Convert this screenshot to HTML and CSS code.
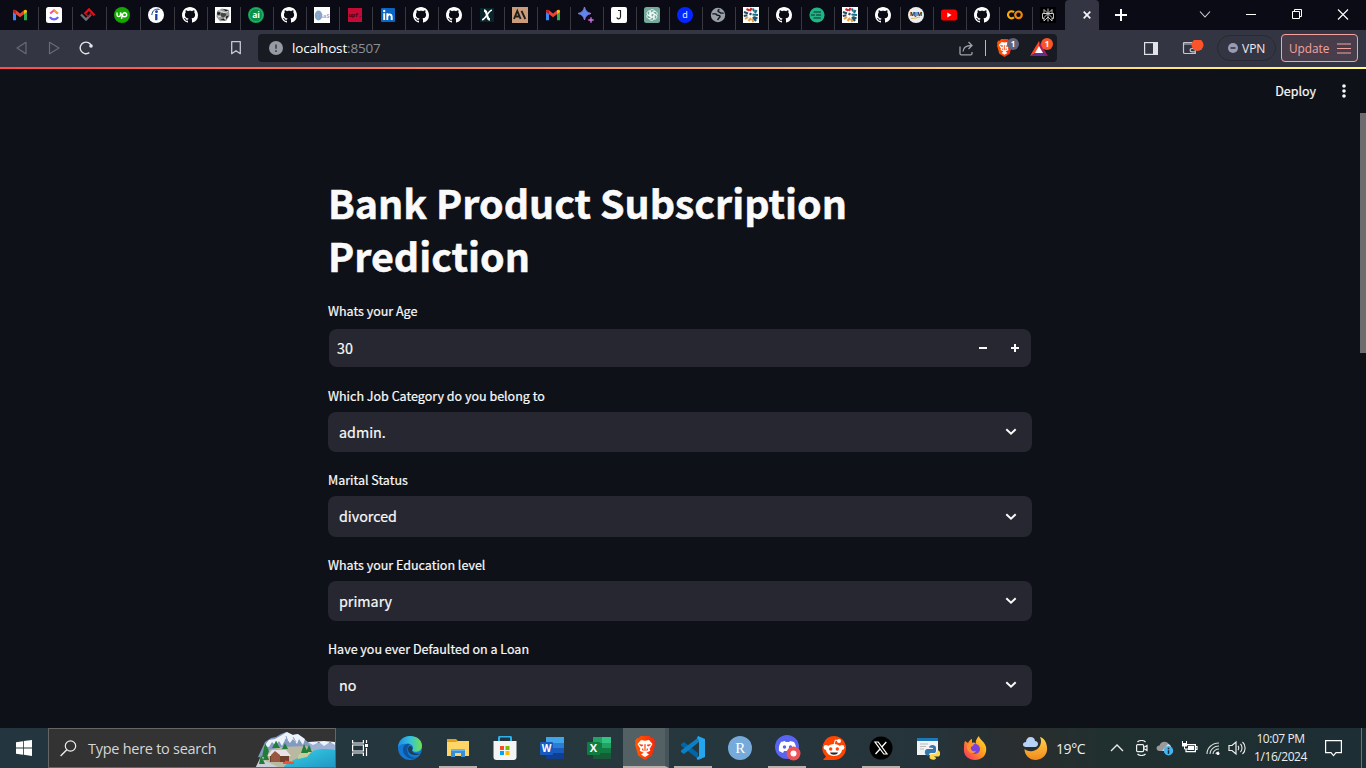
FILE: index.html
```html
<!DOCTYPE html>
<html lang="en">
<head>
<meta charset="utf-8">
<title>Bank Product Subscription Prediction</title>
<link rel="stylesheet" href="styles.css">
</head>
<body>
<svg class="defs" aria-hidden="true">
  <defs>
    <linearGradient id="g-edge" x1="0" y1="0" x2="1" y2="0"><stop offset="0" stop-color="#1d8ee0"/><stop offset=".5" stop-color="#35c1dd"/><stop offset="1" stop-color="#6fe44c"/></linearGradient>
    <linearGradient id="g-brave" x1="0" x2="1"><stop offset="0" stop-color="#ff5a00"/><stop offset="1" stop-color="#ff2408"/></linearGradient>
    <linearGradient id="g-star" x1="0" y1="0" x2="1" y2="1"><stop offset="0" stop-color="#e0567c"/><stop offset=".45" stop-color="#4d8df5"/><stop offset="1" stop-color="#d05bd0"/></linearGradient>
    <linearGradient id="g-fox" x1="1" y1="0" x2="0" y2="1"><stop offset="0" stop-color="#ffe62e"/><stop offset=".45" stop-color="#ff9b1d"/><stop offset="1" stop-color="#f5256d"/></linearGradient>
    <linearGradient id="g-moon" x1="0" y1="0" x2="0" y2="1"><stop offset="0" stop-color="#ffd24a"/><stop offset="1" stop-color="#f28a1c"/></linearGradient>
    <linearGradient id="g-lake" x1="0" y1="0" x2="1" y2="1"><stop offset="0" stop-color="#35d3e6"/><stop offset="1" stop-color="#2196c4"/></linearGradient>
  </defs>
  <symbol id="gmail" viewBox="0 0 16 16"><path d="M1 4v9.300h3V7z" fill="#4285f4"/><path d="M15 4v9.300h-3V7z" fill="#34a853"/><path d="M1 4.300C1 2.600 2.800 2.400 4 3.300L8 6.400l4-3.100v3.900L8 10.200 1 5.100z" fill="#ea4335"/><path d="M12 3.300c1.400-1 3-.6 3 1V5l-3 2.200z" fill="#fbbc04"/><path d="M1 4.300C1 3.300 2 2.600 4 3.300v3.900L1 5z" fill="#c5221f"/></symbol>
  <symbol id="github" viewBox="0 0 16 16"><path fill="#fff" d="M8 0C3.580 0 0 3.580 0 8c0 3.540 2.290 6.530 5.470 7.590.4.070.55-.17.55-.38 0-.19-.01-.82-.01-1.490-2.010.37-2.530-.49-2.690-.94-.09-.23-.48-.94-.82-1.130-.28-.15-.68-.52-.01-.53.63-.01 1.080.58 1.230.82.72 1.210 1.870.87 2.330.66.07-.52.28-.87.51-1.070-1.780-.2-3.640-.89-3.640-3.950 0-.87.31-1.590.82-2.150-.08-.2-.36-1.020.08-2.120 0 0 .67-.21 2.200.82.64-.18 1.320-.27 2-.27s1.360.09 2 .27c1.530-1.040 2.200-.82 2.200-.82.44 1.100.16 1.920.08 2.120.51.56.82 1.270.82 2.150 0 3.070-1.870 3.750-3.650 3.950.29.25.54.73.54 1.480 0 1.070-.01 1.930-.01 2.200 0 .21.15.46.55.38A8.010 8.010 0 0 0 16 8c0-4.420-3.580-8-8-8z"/></symbol>
  <symbol id="mosaic" viewBox="0 0 16 16"><path d="M0 0h16v16H0z" fill="#fff"/><g fill="none" stroke-width="2.100"><path d="M3.500 2l3 1.500M8.500 1L7 4" stroke="#d3222a"/><path d="M10 1.500l1 3M13.500 3L12 6M9.500 7.500l5.500.5" stroke="#176b82"/><path d="M1 5l4 1.500M.8 9l3.500-.8M6.500 6.500l2 1" stroke="#254b66"/><path d="M2 12l3-2M5.500 14l2.500-3M9 12l1.500 3" stroke="#ef9d39"/><path d="M11 10l3.500 1.500M10 10l3 4" stroke="#1d5570"/></g></symbol>
  <symbol id="brave" viewBox="0 0 20 24"><path d="M5.500 0h9l2 2.300L18 2l2 3-.6 2 .5 2-3 10.500L10 24l-6.900-4.500L.1 9l.5-2L0 5l2-3 1.500.3z" fill="url(#g-brave)"/><path d="M6 4l4 .8L14 4l3.500 4-2.800 4.800.6 2-4 2L14 18.500 10 21l-4-2.500 2.700-1.700-4-2 .6-2L2.500 8z" fill="#fff"/><path d="M4.500 8.500l3.500.5-1 1.200L5 9.300zM15.500 8.500L12 9l1 1.200 2-.9zM9.700 8.500L10 15l.3-6.500zM7 13.500l1-.9.300 2zM13 13.500l-1-.9-.3 2z" fill="#fb4208" stroke="#fb4208" stroke-width=".6"/></symbol>
  <symbol id="chev" viewBox="0 0 12 8"><path d="M1.300 1.300L6 5.700l4.700-4.400" fill="none" stroke="#fafafa" stroke-width="2"/></symbol>
</svg>

<div class="desktop">
  <header class="tabstrip">
    <nav class="tabs">
      <span class="tab wide"><svg><use href="#gmail"/></svg></span>
      <span class="tab wide"><svg viewBox="0 0 16 16"><rect width="16" height="16" rx="2.500" fill="#fff"/><path d="M4.200 6.500L8 3.300l3.800 3.200" fill="none" stroke="#f0509a" stroke-width="2"/><path d="M8 3.300l3.800 3.200" stroke="#ff9d3b" stroke-width="2"/><path d="M3.800 10.200c2.300 3 6.100 3 8.400 0" fill="none" stroke="#6a63f6" stroke-width="2.200"/></svg></span>
      <span class="tab wide"><svg viewBox="0 0 16 16"><path d="M1 7.500l5 5 5-5" fill="none" stroke="#6d7076" stroke-width="2.300"/><path d="M4.500 7L9 2.500l5.500 5.700" fill="none" stroke="#e30f1c" stroke-width="2.300"/><path d="M5 6.500l3 3 3.500-3.300" fill="none" stroke="#a51a20" stroke-width="1.600"/></svg></span>
      <span class="tab wide"><svg viewBox="0 0 16 16"><circle cx="8" cy="8" r="8" fill="#14a800"/><path d="M3 5.500v2.300c0 2.400 3.500 2.400 3.500 0V5.500c.9 2.400 2.300 4.300 4 4.300 2.900 0 2.900-4 .2-4-2.500 0-2.300 2.400-3.200 6" fill="none" stroke="#fff" stroke-width="1.400"/></svg></span>
      <span class="tab wide"><svg viewBox="0 0 16 16"><circle cx="8" cy="8" r="8" fill="#fff"/><path d="M8.300 7v6.200" stroke="#173f9c" stroke-width="2.300"/><circle cx="8.500" cy="4.700" r="1.400" fill="#173f9c"/><path d="M3.800 8C4.300 3.300 7.500 1.300 11.500 2.500" fill="none" stroke="#173f9c" stroke-width="1"/></svg></span>
      <span class="tab"><svg><use href="#github"/></svg></span>
      <span class="tab"><svg viewBox="0 0 16 16"><path d="M0 0h16v16H0z" fill="#fff"/><path d="M2 4l5-2.500L14 3l.5 6L11 14l-6 .3L1.500 10z" fill="#999"/><path d="M2.500 5l3 .5-1 2.500-2.500-.5zM8 2l5 1-1.500 2zM11 9.500l3-1-3 4zM5 12.500l4-1 1 2z" fill="#1c1c1c"/><path d="M5.500 6.500l4-1.500 2 3-3 2.500-3-1.500z" fill="#444"/><path d="M4 3.500l5 2 4-1M3 10l3-1M9 11l2 1" stroke="#ddd" stroke-width="1.200" fill="none"/></svg></span>
      <span class="tab"><svg viewBox="0 0 16 16"><circle cx="8" cy="8" r="8" fill="#10a152"/><circle cx="8" cy="8" r="6.600" fill="#08904a" stroke="#48bd7a" stroke-width=".6"/><text x="8" y="11" text-anchor="middle" class="glyph-bold" font-size="8.500">ai</text></svg></span>
      <span class="tab"><svg><use href="#github"/></svg></span>
      <span class="tab"><svg viewBox="0 0 16 16"><path d="M0 0h16v16H0z" fill="#fff"/><ellipse cx="4.500" cy="8.500" rx="3.700" ry="5" fill="#7fa9c9"/><text x="2" y="10.500" font-size="5.500" font-weight="bold" fill="#ad9cc0">EGaS</text></svg></span>
      <span class="tab"><svg viewBox="0 0 16 16"><path d="M1 1h14v14H1z" fill="#c50a35"/><text x="8" y="9.500" text-anchor="middle" font-size="5.500" fill="#300512" font-weight="bold" font-family="Liberation Mono, monospace">upf.</text></svg></span>
      <span class="tab"><svg viewBox="0 0 16 16"><rect x="1" y="1" width="14" height="14" rx="1" fill="#0a66c2"/><path d="M4.200 6.300V13M7.300 13V6.300M7.400 10c0-3.400 4.300-3.600 4.300 0v3" fill="none" stroke="#fff" stroke-width="1.900"/><circle cx="4.200" cy="4" r="1.200" fill="#fff"/></svg></span>
      <span class="tab"><svg><use href="#github"/></svg></span>
      <span class="tab"><svg><use href="#github"/></svg></span>
      <span class="tab"><svg viewBox="0 0 16 16"><path d="M1 1h14v14H1z" fill="#07252a"/><path d="M5 3.500c1.600 0 2 .7 2.500 2.800l1 3.500c.4 1.800 1 2.700 2.500 2.700" fill="none" stroke="#fff" stroke-width="2.300"/><path d="M13 3.200c-1.800-.2-2.500.8-4.700 4.300S5 12.700 3 12.600" fill="none" stroke="#fff" stroke-width="1.600"/></svg></span>
      <span class="tab"><svg viewBox="0 0 16 16"><path d="M0 0h16v16H0z" fill="#cc9b7a"/><path d="M2 12L5.300 4l3.300 8M3.400 9.500h3.900M9.500 3.800l3.800 8.200" fill="none" stroke="#1f1f1e" stroke-width="1.900"/></svg></span>
      <span class="tab"><svg><use href="#gmail"/></svg></span>
      <span class="tab"><svg viewBox="0 0 16 16"><path d="M6.500 0C7.500 4 9 5.500 13 6.500 9 7.500 7.500 9 6.500 13 5.500 9 4 7.500 0 6.500 4 5.500 5.500 4 6.500 0z" fill="url(#g-star)" stroke="url(#g-star)"/><path d="M13 10c.5 2 1 2.500 3 3-2 .5-2.500 1-3 3-.5-2-1-2.500-3-3 2-.5 2.500-1 3-3z" fill="#c76cce" stroke="#c76cce" stroke-width=".5"/></svg></span>
      <span class="tab"><svg viewBox="0 0 16 16"><rect width="16" height="16" rx="2" fill="#fff"/><path d="M7 3.500h3M9.500 3.500v6.300c0 2.500-3.200 2.700-3.600.5" fill="none" stroke="#222" stroke-width="1.200"/></svg></span>
      <span class="tab"><svg viewBox="0 0 16 16"><rect width="16" height="16" rx="2.500" fill="#74aa9c"/><g fill="none" stroke="#fff" stroke-width=".8"><path d="M5.800 9.200V5c0-3 4.300-3.200 4.800-.5L7 6.500v3l1 .6"/><path d="M5.800 9.200V5c0-3 4.300-3.200 4.800-.5L7 6.500v3l1 .6" transform="rotate(60 8 8)"/><path d="M5.800 9.200V5c0-3 4.300-3.200 4.800-.5L7 6.500" transform="rotate(120 8 8)"/><path d="M5.800 9.200V5c0-3 4.300-3.200 4.800-.5L7 6.500" transform="rotate(180 8 8)"/><path d="M5.800 9.200V5c0-3 4.300-3.200 4.800-.5L7 6.500" transform="rotate(240 8 8)"/><path d="M5.800 9.200V5c0-3 4.300-3.200 4.800-.5L7 6.500" transform="rotate(300 8 8)"/></g></svg></span>
      <span class="tab"><svg viewBox="0 0 16 16"><circle cx="8" cy="8" r="8" fill="#0527ff"/><text x="8" y="11" text-anchor="middle" font-size="9" fill="#fff">d</text></svg></span>
      <span class="tab"><svg viewBox="0 0 16 16"><circle cx="8" cy="8" r="7.200" fill="#9aa0a6"/><path d="M2.300 6.900h3.500c.8 1.500 1.500 1.600 3 1.600 1.800.1 1.500 2 .3 2.300L7.500 13" fill="none" stroke="#14161e" stroke-width="1.400"/><path d="M9.500 2.500C7.500 3 7.500 5 9.500 5.100l1.300 1h2.900" fill="none" stroke="#14161e" stroke-width="1.400"/></svg></span>
      <span class="tab"><svg><use href="#mosaic"/></svg></span>
      <span class="tab"><svg><use href="#github"/></svg></span>
      <span class="tab"><svg viewBox="0 0 16 16"><circle cx="8" cy="8" r="7.600" fill="#20b486"/><path d="M5 5h6.500M2.500 8h3M7.500 8h4M5 11h6.500" fill="none" stroke="#082c26" stroke-width="1.200" stroke-linecap="round"/></svg></span>
      <span class="tab"><svg><use href="#mosaic"/></svg></span>
      <span class="tab"><svg><use href="#github"/></svg></span>
      <span class="tab"><svg viewBox="0 0 16 16"><circle cx="8" cy="8" r="8" fill="#eee"/><text x="8" y="9" text-anchor="middle" font-size="5.500" font-weight="bold" fill="#111">MJM</text><path d="M3 11.500c4 0 6-1 9-1.500" stroke="#e5b45e" fill="none"/></svg></span>
      <span class="tab"><svg viewBox="0 0 16 16"><rect y="2.500" width="16" height="11" rx="2.500" fill="#f00"/><path d="M6.300 5.500v5l4.200-2.500z" fill="#fff"/></svg></span>
      <span class="tab"><svg viewBox="0 0 16 16"><use href="#github"/></svg></span>
      <span class="tab"><svg viewBox="0 0 16 16"><path d="M7 5.300A3.500 3.500 0 1 0 7 10.300" fill="none" stroke="#f9ab00" stroke-width="2.200"/><circle cx="11.500" cy="7.800" r="3.300" fill="none" stroke="#f08705" stroke-width="2.200"/></svg></span>
      <span class="tab last"><svg viewBox="0 0 16 16"><path d="M0 0h16v16H0z" fill="#000"/><path d="M8 1.500v13M4 2.500l4 4 4-4v4H4zM2.500 6.500H8l-4 4v3.500l4-4 4 4v-3.500l-4-4h5.500v5H12M4 11.500H2.500v-5" fill="none" stroke="#d5d5d5" stroke-width=".9"/></svg></span>
      <span class="tab active"><svg viewBox="0 0 8 8"><path d="M.7.7l6.600 6.600M7.300.7L.7 7.300" stroke="#f4f4f6" stroke-width="1.700"/></svg></span>
    </nav>
    <svg class="newtab" viewBox="0 0 12 12"><path d="M6 0v12M0 6h12" stroke="#fff" stroke-width="2"/></svg>
    <div class="winctl">
      <svg viewBox="0 0 46 30"><path d="M18 11.500l5 5.500 5-5.500" fill="none" stroke="#d5d5da" stroke-width="1.100"/></svg>
      <svg viewBox="0 0 46 30"><path d="M18 14.500h10" stroke="#fff"/></svg>
      <svg viewBox="0 0 46 30"><path d="M18.500 11.500h7v7h-7zM20.500 11.500v-2h7v7h-2" fill="none" stroke="#fff"/></svg>
      <svg viewBox="0 0 46 30"><path d="M18 9.500l10 10M28 9.500l-10 10" stroke="#fff" stroke-width="1.100"/></svg>
    </div>
  </header>

  <div class="toolbar">
    <div class="navbtns">
      <svg width="12" height="14" viewBox="0 0 12 14"><path d="M10 1.300v11.400L1 7z" fill="none" stroke="#686a77" stroke-width="1.200" stroke-linejoin="round"/></svg>
      <svg width="12" height="14" viewBox="0 0 12 14"><path d="M1.500 1.300v11.400l9.500-5.700z" fill="none" stroke="#686a77" stroke-width="1.200" stroke-linejoin="round"/></svg>
      <svg width="14" height="14" viewBox="0 0 14 14"><path d="M10.300 11.700A5.800 5.800 0 1 1 12.500 5" fill="none" stroke="#e6e6ea" stroke-width="1.400"/><circle cx="12" cy="5" r="1.800" fill="#e6e6ea"/></svg>
    </div>
    <svg class="bookmark" width="10" height="14" viewBox="0 0 10 14"><path d="M.7.700h8.600v12L5 9.700.7 12.700z" fill="none" stroke="#c8c9d0" stroke-width="1.300" stroke-linejoin="round"/></svg>
    <div class="urlbar">
      <svg width="14" height="14" viewBox="0 0 14 14"><circle cx="7" cy="7" r="7" fill="#969aa3"/><path d="M7 3.500v4.300M7 9.300v1.700" stroke="#3c4049" stroke-width="1.600"/></svg>
      <span class="url">localhost<i>:8507</i></span>
      <svg class="share" width="15" height="15" viewBox="0 0 15 15"><path d="M1 5.500v7c0 .8.500 1.300 1.300 1.300h9.400c.8 0 1.300-.5 1.300-1.300V11M4 10.500c.3-4 2.700-6 8.500-6M9.500 1l3.500 3.500L9.500 8" fill="none" stroke="#a0a2a9" stroke-width="1.300"/></svg>
      <span class="sep"></span>
      <span class="shield"><svg width="15" height="18"><use href="#brave"/></svg><b class="badge gray">1</b></span>
      <span class="bat"><svg width="18" height="15" viewBox="0 0 18 15"><path d="M9 0L0 15l9-5z" fill="#ff4726"/><path d="M9 0l9 15-9-5z" fill="#9e1f63"/><path d="M0 15h18l-9-5z" fill="#662d91"/><path d="M9 5l4 7H5z" fill="#fff"/></svg><b class="badge">1</b></span>
    </div>
    <div class="tools">
      <svg class="panel" width="14" height="13" viewBox="0 0 14 13"><rect x=".6" y=".6" width="12.800" height="11.800" fill="none" stroke="#e1e1e6" stroke-width="1.200"/><path d="M9 0h5v13H9z" fill="#e1e1e6"/></svg>
      <svg class="wallet" width="22" height="16" viewBox="0 0 22 16"><path d="M12.500 7V4h-10C1 4 1 2.500 2.500 2.500h9V4M1.500 3.500v8.700c0 .8.500 1.300 1.300 1.300h10.500V8.500H10c-2.500 0-2.500 3.300 0 3.300h3.300" fill="none" stroke="#c5c6cd" stroke-width="1.200"/><circle cx="15.500" cy="5" r="6" fill="#fb542b"/></svg>
      <span class="vpn"><svg width="10" height="10" viewBox="0 0 10 10"><circle cx="5" cy="5" r="5" fill="#989bb3"/><path d="M2.500 5h5" stroke="#2f313e" stroke-width="1.500"/></svg>VPN</span>
      <span class="update">Update<svg width="14" height="11" viewBox="0 0 14 11"><path d="M0 1h14M0 5.500h14M0 10h14" stroke="#f4a3a0" stroke-width="1.200"/></svg></span>
    </div>
  </div>

  <main class="app">
    <div class="rainbow"></div>
    <div class="apphead"><span>Deploy</span><svg width="4" height="14" viewBox="0 0 4 14"><g fill="#fafafa"><circle cx="2" cy="2" r="1.800"/><circle cx="2" cy="7" r="1.800"/><circle cx="2" cy="12" r="1.800"/></g></svg></div>
    <div class="scroll">
      <div class="content">
        <h1>Bank Product Subscription Prediction</h1>
        <div class="field first"><label>Whats your Age</label><div class="box number"><span>30</span><svg width="8" height="8" viewBox="0 0 8 8"><path d="M0 4h8" stroke="#fafafa" stroke-width="2"/></svg><svg width="8" height="8" viewBox="0 0 8 8"><path d="M0 4h8M4 0v8" stroke="#fafafa" stroke-width="2"/></svg></div></div>
        <div class="field"><label>Which Job Category do you belong to</label><div class="box"><span>admin.</span><svg width="12" height="8"><use href="#chev"/></svg></div></div>
        <div class="field"><label>Marital Status</label><div class="box"><span>divorced</span><svg width="12" height="8"><use href="#chev"/></svg></div></div>
        <div class="field"><label>Whats your Education level</label><div class="box"><span>primary</span><svg width="12" height="8"><use href="#chev"/></svg></div></div>
        <div class="field"><label>Have you ever Defaulted on a Loan</label><div class="box"><span>no</span><svg width="12" height="8"><use href="#chev"/></svg></div></div>
      </div>
      <div class="thumb"></div>
    </div>
  </main>

  <footer class="taskbar">
    <div class="start"><svg width="16" height="16" viewBox="0 0 16 16"><path d="M0 2.300L7 1.200v6.300H0zM7.800 1.100L16 0v7.500H7.800zM0 8.400h7v6.300l-7-1zM7.800 8.400H16V16l-8.200-1.200z" fill="#fff"/></svg></div>
    <div class="search">
      <svg width="17" height="17" viewBox="0 0 17 17"><circle cx="10.500" cy="6" r="5.200" fill="none" stroke="#eee" stroke-width="1.200"/><path d="M6.800 9.700L.6 16" stroke="#eee" stroke-width="1.400"/></svg>
      <span>Type here to search</span>
      <svg class="scene" width="79" height="35" viewBox="0 0 79 35">
        <path d="M46 12l6-2 8 1 8-1 11 1v11H44z" fill="#9bb2d4"/><path d="M52 10l5 3 6-3 5 4 6-4 5 3v-3l-11-1z" fill="#eef3fb"/>
        <path d="M2 25L9 10l6-4 5-1 5-3 5-2 6 3 5-1 5 4 5 3 4 6 1 8-25 8z" fill="#8299c0"/>
        <path d="M8 14l5-6 6-1 7-4 5-3 6 3 5-1 7 5-2 6-4-6-2 5-4-5-3 4-4-5-4 8-3-5-3 5-4-4-3 5z" fill="#eef2fb"/>
        <path d="M20 9l3 5M30 4l2 6M37 5l3 5" stroke="#8ea3c9"/>
        <path d="M0 35L5 24l8-6 12-3 26-1 6 5-11 8-18 8z" fill="#b9b8a0"/>
        <path d="M79 18c-11-2-21-1-24 3-4 4-14 4-19 8-1 2-7 3-8 6h51z" fill="url(#g-lake)"/>
        <path d="M0 35l4-8 10 4 8 4z" fill="#c7d0d8"/>
        <path d="M42 24l6-7 9 1-6 7-9 2z" fill="#c6cd9b"/>
        <path d="M14 23h19v7H14z" fill="#70412c"/><path d="M11 24l5-6h14l5 6z" fill="#e9e2e6"/><path d="M15 23l4-4 5 4v7h-9z" fill="#985840"/><path d="M27 31h11M29 29.500l6 1" stroke="#ef513b" stroke-width="2"/>
        <g fill="#237d3a"><path d="M9 11l4 8-2 6H6zM5 23l4 9H3zM10 20l3 8H7zM20 9l4 7h-8zM29 11l3 6h-6zM48 12l4 9h-7zM53 13l3 7h-6z"/></g>
      </svg>
    </div>
    <div class="task taskview"><svg width="17" height="16" viewBox="0 0 17 16"><path d="M.6 0v3h10.800V0M.6 16v-3h10.800v3M.6 5h10.800v6H.6zM14.500 0v3M14.500 8v8" fill="none" stroke="#fff" stroke-width="1.200"/><path d="M13 4h3v3h-3z" fill="#fff"/></svg></div>
    <div class="task edge"><svg width="24" height="24" viewBox="0 0 24 24"><circle cx="12" cy="12" r="12" fill="#1478d0"/><path d="M0 11C1 3.500 6 0 12 0c7 0 12 4 12 9.800 0 4-3 6-6.500 6-2.500 0-3.800-1-3-2.300 1.500-2 .4-5-3.300-5.500C6.500 7 2 8 0 11z" fill="url(#g-edge)"/><path d="M12 8C6 7 4 12 5.500 16.500 7.500 21.500 13 24.500 19.500 21.500 12.500 22.500 8.800 18.500 9.300 13 9.600 10.500 11 8.700 12 8z" fill="#0b559f"/><path d="M12.500 10c-2 0-3 2-2.200 5 1.500 4.300 7.200 5.300 12.200 2.500-4.500.7-7.800-.3-8.500-3.300 1.200-1.300.5-3.400-1.500-4.200z" fill="#1d3e55"/></svg></div>
    <div class="task running"><svg width="22" height="20" viewBox="0 0 22 20"><path d="M0 1h9l2 2h10v5H0z" fill="#e2a11c"/><path d="M0 4h9l2-1h11v15H0z" fill="#ffd666"/><path d="M4 11h14v8h-4v-4H8v4H4z" fill="#398ed8"/><path d="M4 11h14v2H4z" fill="#66b4ef"/></svg></div>
    <div class="task"><svg width="24" height="24" viewBox="0 0 24 24"><path d="M6 6V2c0-1 .5-1.500 1.500-1.500h9C17.500.5 18 1 18 2v4" fill="none" stroke="#2eb1ef" stroke-width="2"/><path d="M.5 5h23v16c0 2-1 3-3 3h-17c-2 0-3-1-3-3z" fill="#f4f4f4"/><path d="M7 10h4v4H7z" fill="#f25022"/><path d="M12.500 10h4v4h-4z" fill="#7fba00"/><path d="M7 15h4v4H7z" fill="#00a4ef"/><path d="M12.500 15h4v4h-4z" fill="#ffb900"/></svg></div>
    <div class="task"><svg width="24" height="22" viewBox="0 0 24 22"><path d="M6 0h18v6H6z" fill="#41a5ee"/><path d="M6 6h18v5H6z" fill="#2b7cd3"/><path d="M6 11h18v5H6z" fill="#185abd"/><path d="M6 16h18v6H6z" fill="#103f91"/><rect y="5" width="13" height="13" rx="1" fill="#185abd"/><text x="6.500" y="15" text-anchor="middle" class="glyph-bold" font-size="10">W</text></svg></div>
    <div class="task"><svg width="24" height="22" viewBox="0 0 24 22"><path d="M6 0h9v6H6z" fill="#21a366"/><path d="M15 0h9v6h-9z" fill="#33c481"/><path d="M6 6h9v10H6z" fill="#107c41"/><path d="M15 6h9v5h-9z" fill="#21a366"/><path d="M15 11h9v5h-9z" fill="#107c41"/><path d="M6 16h18v6H6z" fill="#185c37"/><rect y="5" width="13" height="13" rx="1" fill="#107c41"/><text x="6.500" y="15" text-anchor="middle" class="glyph-bold" font-size="11">X</text></svg></div>
    <div class="task current"><svg width="20" height="24"><use href="#brave"/></svg></div>
    <div class="task running"><svg width="24" height="24" viewBox="0 0 24 24"><path d="M0 8l3-2 14 11v6L0 9.500z" fill="#0065a9"/><path d="M0 16l3 2L18 6V1L0 14.500z" fill="#0b80c5"/><path d="M17 0l7 3v18l-7 3-1.500-1.500L18 20V4l-2-2z" fill="#24a5ec"/></svg></div>
    <div class="task"><svg width="24" height="24" viewBox="0 0 24 24"><circle cx="12" cy="12" r="12" fill="#75aadb"/><text x="12.300" y="17" text-anchor="middle" font-family="Liberation Serif, serif" font-size="15" fill="#fff">R</text></svg></div>
    <div class="task running"><svg class="discord" width="26" height="26" viewBox="0 0 26 26"><circle cx="12" cy="12" r="12" fill="#5865f2"/><path d="M6 7l4-1 .7 1h3.600l.7-1 4 1c2 3 2.500 6 2 9l-4 2-1-2h-7l-1 2-4-2c-.5-3 0-6 2-9z" fill="#fff"/><circle cx="9.500" cy="12" r="1.700" fill="#5865f2"/><circle cx="15.500" cy="12" r="1.700" fill="#5865f2"/><circle cx="18.500" cy="18.500" r="7" fill="#ed5356"/><circle cx="18.500" cy="18.500" r="3" fill="#fff"/></svg></div>
    <div class="task"><svg width="24" height="24" viewBox="0 0 24 24"><path d="M12 0a12 12 0 0 1 0 24H1l3-3.500A12 12 0 0 1 12 0z" fill="#ff4500"/><path d="M12 9l1.300-5 3.200.8" fill="none" stroke="#fff"/><circle cx="17" cy="5" r="2" fill="#fff"/><circle cx="4" cy="11.500" r="2.400" fill="#fff"/><circle cx="20" cy="11.500" r="2.400" fill="#fff"/><ellipse cx="12" cy="14" rx="8" ry="6" fill="#fff"/><circle cx="8.700" cy="13" r="1.700" fill="#ff4500"/><circle cx="15.300" cy="13" r="1.700" fill="#ff4500"/><path d="M8 16.500h8c-1 3-7 3-8 0z" fill="#28262a"/></svg></div>
    <div class="task running"><svg width="24" height="24" viewBox="0 0 24 24"><circle cx="12" cy="12" r="11.500" fill="#000"/><path d="M6 6h3.200L18 18h-3.200z" fill="none" stroke="#fff" stroke-width="1.200"/><path d="M17.300 6l-4.500 5M11 13l-4.500 5" stroke="#fff" stroke-width="1.300"/></svg></div>
    <div class="task"><svg class="py" width="23" height="23" viewBox="0 0 23 23"><path d="M0 1h21v17H0z" fill="#f1f3f5"/><path d="M0 1h21v3H0z" fill="#1d78b8"/><path d="M3 7h8M3 9.500h6M3 12h4" stroke="#bbb"/><path d="M12 10.500C12 7 19 7 19 10.500V14c0 1.500-1 2-2.500 2H14c-1.500 0-2 1-2 2.500h-1.500C7 18.500 7 12 10.500 12H16v-1z" fill="#3776ab"/><path d="M12.500 20c0-2.500 1-3 3-3h1.500c2 0 3-1 3-3V13c4 0 4 6.500 1 6.500h-4c.5 1 2 .5 2 1.500 0 2.500-6.500 2.500-6.500-1z" fill="#ffd94d"/></svg></div>
    <div class="task"><svg width="24" height="24" viewBox="0 0 24 24"><path d="M2 5l3 2c1-2 3-4 4-4v4c2-1 3 0 4 1-1-3 1-6 3-8 0 3 6 6 7 11 1.500 8-4 13-11 13S0 19 1 12c0-3 0-5 1-7z" fill="url(#g-fox)"/><circle cx="12" cy="13" r="5" fill="#7941dd"/><path d="M5 8c3-1 5-1 6 1l-3 2c-1 3 2 5 5 4-2 4-9 2-9-4z" fill="#ff922d"/></svg></div>

    <div class="weather"><svg width="25" height="25" viewBox="0 0 25 25"><path d="M17 1c3 6-1 13-7 14-4 .7-7-.5-8.500-2C1.500 19 6 24 13 24c7-.5 12-6 11-13-.5-5-3-9-7-10z" fill="url(#g-moon)"/><path d="M3 11c-4 0-4-5 0-5 0-3 2-5 4.500-5S12 2.500 12 5c4 0 4 6 0 6z" fill="#b8d1f7"/></svg><span>19°C</span></div>
    <div class="tray">
      <svg width="14" height="16" viewBox="0 0 14 16"><path d="M1 11l6-6 6 6" fill="none" stroke="#eee" stroke-width="1.300"/></svg>
      <svg class="meet" width="12" height="16" viewBox="0 0 12 16"><rect x=".6" y="4.600" width="7" height="7" rx="1" fill="none" stroke="#eee" stroke-width="1.200"/><path d="M7.500 7.500l3.500-2v5l-3.500-2M1.500 2c2-2 6-2 8 0M1.500 14c2 2 6 2 8 0" fill="none" stroke="#eee" stroke-width="1.200"/></svg>
      <svg width="18" height="16" viewBox="0 0 18 16"><path d="M4 11c-4.500 0-4.500-5.500-.5-5.500C4.500.5 12 .5 13 5c3 0 3 6 1 6z" fill="#9a9a9a"/><path d="M6 11l6-7c2 0 4 3 3 7z" fill="#ddd"/><circle cx="12.500" cy="10.800" r="4.700" fill="#46b4ee"/><path d="M12.500 10.200v3.500M12.500 7.800v1.400" stroke="#102535" stroke-width="1.500"/></svg>
      <svg width="17" height="16" viewBox="0 0 17 16"><path d="M5 4.600h9.400v7H5V9M14.500 6.500H16v3h-1.500" fill="none" stroke="#fff" stroke-width="1.200"/><path d="M7 6h6v4H7zM1 3h5v3.500H1z" fill="#fff"/><path d="M1.500 1v2M5.500 1v2M3.500 6v3H7" fill="none" stroke="#fff"/></svg>
      <svg width="14" height="16" viewBox="0 0 14 16"><path d="M1 14C1 8 6 3 13 3M4 14c0-4.500 4-8 9-8M7 14c0-3 3-5 6-5M10 14c0-1.500 1-2 3-2" fill="none" stroke="#d8dddd" stroke-width="1.100"/><circle cx="12" cy="13.500" r="1.500" fill="#fff"/></svg>
      <svg width="18" height="16" viewBox="0 0 18 16"><path d="M1 5.500h3L8 2v12l-4-3.500H1z" fill="none" stroke="#eee" stroke-width="1.200"/><path d="M10 6c1 1 1 3 0 4M12.500 4c2 2 2 6 0 8M14.500 2c3.500 3 3.500 9 0 12" fill="none" stroke="#eee" stroke-width="1.100"/></svg>
    </div>
    <div class="clock"><span>10:07 PM</span><span>1/16/2024</span></div>
    <svg class="notify" width="17" height="17" viewBox="0 0 17 17"><path d="M.6.6h15.800v12H11l-2.500 3-2.500-3H.6z" fill="none" stroke="#fff" stroke-width="1.200"/></svg>
    <div class="peek"></div>
  </footer>
</div>
</body>
</html>
```
FILE: styles.css
```css
* { box-sizing: border-box; }
body { margin: 0; background: #0e1117; font-family: "Open Sans", "Noto Sans", sans-serif; }
svg { display: block; flex: none; }
.defs { position: absolute; width: 0; height: 0; }
.glyph-bold { font-weight: 700; fill: #fff; }
.desktop { width: 1366px; height: 768px; display: flex; flex-direction: column; overflow: hidden; }

/* browser tabs */
.tabstrip { height: 30px; flex: none; display: flex; background: #0a0b14; padding-left: 5px; }
.tabs { display: flex; }
.tab { width: 33px; height: 23px; margin-top: 7px; padding-left: 7px; border-right: 1px solid #393a40; }
.tab svg { width: 16px; height: 16px; }
.tab.wide { width: 34px; }
.tab.last { width: 32px; border: 0; }
.tab.active { width: 34px; height: 30px; margin: 0; padding: 11px 0 0 18px; border: 0; border-radius: 4px 4px 0 0; background: #333543; }
.tab.active svg { width: 8px; height: 8px; }
.newtab { width: 12px; height: 12px; margin: 9px 0 0 16px; }
.winctl { display: flex; margin-left: auto; }
.winctl svg { width: 46px; height: 30px; }

/* address row */
.toolbar { height: 37px; flex: none; display: flex; align-items: center; background: #333543; padding: 0 8px 1px 16px; color: #eee; }
.navbtns { display: flex; align-items: center; gap: 20px; width: 215px; }
.navbtns svg:last-child { margin-left: -1px; }
.bookmark { margin-right: 16px; }
.urlbar { width: 799px; height: 28px; border-radius: 4px; background: #191b22; display: flex; align-items: center; padding-left: 11px; margin-left: 1px; }
.url { font-size: 13.500px; margin-left: 9px; color: #fff; letter-spacing: -.17px; }
.url i { font-style: normal; color: #8d9097; }
.share { margin-left: auto; }
.sep { width: 1px; height: 16px; background: #b8b9bd; margin: 0 11px 0 11px; }
.shield, .bat { position: relative; width: 33px; }
.bat { width: 27px; }
.badge { position: absolute; right: 0; top: -5px; width: 12px; height: 12px; border-radius: 6px; background: #fb542b; color: #fff; font-size: 8px; line-height: 12px; text-align: center; }
.badge.gray { left: 10px; top: -1px; background: #62657a; }
.bat .badge { left: 11px; top: -3px; }
.tools { flex: 1; display: flex; align-items: center; font-size: 12.500px; }
.panel { margin-left: 87px; }
.wallet { margin-left: 24px; margin-top: 0; }
.vpn { width: 59px; height: 26px; margin-left: 13px; border: 1px solid #272934; border-radius: 13px; display: flex; align-items: center; gap: 4px; padding-left: 10px; font-size: 12px; }
.update { width: 77px; height: 28px; margin-left: 5px; border: 1px solid #f4a3a0; border-radius: 4px; background: #483e4b; color: #f4a3a0; display: flex; align-items: center; justify-content: space-between; padding: 0 6px 0 7px; font-size: 11.800px; }

/* app page */
.app { flex: 1; min-height: 0; display: flex; flex-direction: column; font-family: "Noto Sans CJK SC", sans-serif; color: #fafafa; -webkit-text-stroke: .2px #fafafa; overflow: hidden; }
.rainbow { height: 2px; flex: none; background: linear-gradient(90deg, #ff4b4b, #fffd80); }
.apphead { height: 44px; flex: none; display: flex; align-items: center; justify-content: flex-end; gap: 26px; padding-right: 20px; font-size: 12.500px; }
.apphead span { padding-bottom: 2px; }
.scroll { flex: 1; min-height: 0; display: flex; justify-content: space-between; padding-left: 328px; }
.content { width: 704px; padding-top: 61.700px; display: flex; flex-direction: column; gap: 16px; }
h1 { margin: 0; height: 109px; font-size: 39.400px; line-height: 53.100px; font-weight: 700; -webkit-text-stroke-width: .5px; }
.field { height: 68.400px; flex: none; display: flex; flex-direction: column; gap: 4px; }
.field label { height: 24px; line-height: 23px; font-size: 12.530px; }
.first label { line-height: 22px; }
.box { height: 40.400px; border-radius: 8px; background: #262730; display: flex; align-items: center; padding: 0 15px 0 11px; font-size: 14.300px; }
.box span { flex: 1; padding-bottom: 1.500px; }
.number { height: 38px; margin: 1px; padding: 0 12px 0 8px; gap: 24px; }
.number span { padding-bottom: 0; }
.thumb { width: 6px; height: 240px; background: #6c6c6e; }

/* Windows taskbar */
.taskbar { height: 40px; flex: none; display: flex; align-items: center; background: linear-gradient(90deg, #23363f 0, #26373d 45%, #25343a 68%, #2a2d2e 75%, #20302f 81%, #1d2e35 100%); color: #eee; }
.start { width: 48px; display: flex; justify-content: center; }
.search { width: 288px; height: 40px; border: 1px solid #656565; background: #333; display: flex; align-items: center; padding-left: 11px; color: #d6d6d6; font-size: 14.500px; letter-spacing: -.27px; }
.search span { flex: 1; margin-left: 11px; }
.scene { align-self: flex-end; }
.task { width: 47px; height: 40px; display: flex; align-items: center; justify-content: center; background-repeat: no-repeat; background-position: bottom; }
.taskview { width: 51px; padding-right: 3px; }
.edge { padding-right: 2px; }
.running { background-image: linear-gradient(#b7b0ac, #b7b0ac); background-size: 38px 2px; }
.current { width: 46px; margin-left: 1px; background: #536064; border-bottom: 2px solid #b7b0ac; border-right: 4px solid #465358; padding: 2px 0 0 1px; }
.discord { margin-left: 2px; }
.py { margin-left: 2px; }
.weather { display: flex; align-items: center; gap: 8px; margin-left: 25px; width: 87px; font-size: 14px; letter-spacing: -.4px; }
.tray { display: flex; align-items: center; width: 136px; justify-content: space-between; }
.meet { margin-left: 4px; }
.clock { display: flex; flex-direction: column; align-items: center; width: 69px; font-size: 12px; line-height: 18px; letter-spacing: -.45px; }
.notify { margin-left: 10px; }
.peek { margin-left: auto; width: 5px; height: 40px; border-left: 1px solid #687478; }
```
